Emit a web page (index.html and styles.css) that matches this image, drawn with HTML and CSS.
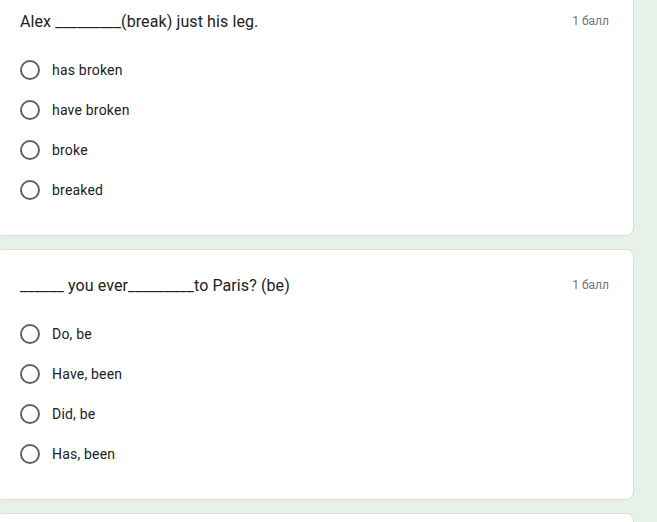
FILE: index.html
```html
<!DOCTYPE html>
<html lang="ru">
<head>
<meta charset="utf-8">
<link rel="stylesheet" href="styles.css">
</head>
<body>
<div class="list">
  <div class="card">
    <div class="head">
      <div class="title">Alex _________(break) just his leg.</div>
      <div class="points">1 балл</div>
    </div>
    <div class="options">
      <div class="opt"><span class="radio"></span><span class="label">has broken</span></div>
      <div class="opt"><span class="radio"></span><span class="label">have broken</span></div>
      <div class="opt"><span class="radio"></span><span class="label">broke</span></div>
      <div class="opt"><span class="radio"></span><span class="label">breaked</span></div>
    </div>
  </div>
  <div class="card">
    <div class="head">
      <div class="title">______ you ever_________to Paris? (be)</div>
      <div class="points">1 балл</div>
    </div>
    <div class="options">
      <div class="opt"><span class="radio"></span><span class="label">Do, be</span></div>
      <div class="opt"><span class="radio"></span><span class="label">Have, been</span></div>
      <div class="opt"><span class="radio"></span><span class="label">Did, be</span></div>
      <div class="opt"><span class="radio"></span><span class="label">Has, been</span></div>
    </div>
  </div>
  <div class="card"></div>
</div>
</body>
</html>
```
FILE: styles.css
```css
html, body {
  margin: 0;
  padding: 0;
  background: #e6f2e7;
  overflow: hidden;
  height: 522px;
}
.list {
  display: flex;
  flex-direction: column;
  gap: 13px;
  margin-top: -15px;
  margin-left: -5px;
  width: 639px;
}
.card {
  background: #fff;
  border: 1px solid #dadce0;
  border-radius: 8px;
  padding: 23px 24px 25px 24px;
  min-height: 200px;
}
.head {
  display: flex;
  justify-content: space-between;
  align-items: center;
  height: 24px;
}
.title {
  font-family: Roboto, "Noto Sans", sans-serif;
  font-size: 16px;
  color: #202124;
  letter-spacing: 0.1px;
}
.points {
  font-family: Roboto, "Noto Sans", sans-serif;
  font-size: 12px;
  color: #70757a;
  padding-right: 0;
}
.options {
  display: flex;
  flex-direction: column;
  margin-top: 17px;
}
.opt {
  display: flex;
  align-items: center;
  height: 40px;
  gap: 12px;
}
.radio {
  width: 16px;
  height: 16px;
  border: 2px solid #5f6368;
  border-radius: 50%;
}
.label {
  font-family: Roboto, "Noto Sans", sans-serif;
  font-size: 14px;
  color: #202124;
  letter-spacing: 0.2px;
}
```
